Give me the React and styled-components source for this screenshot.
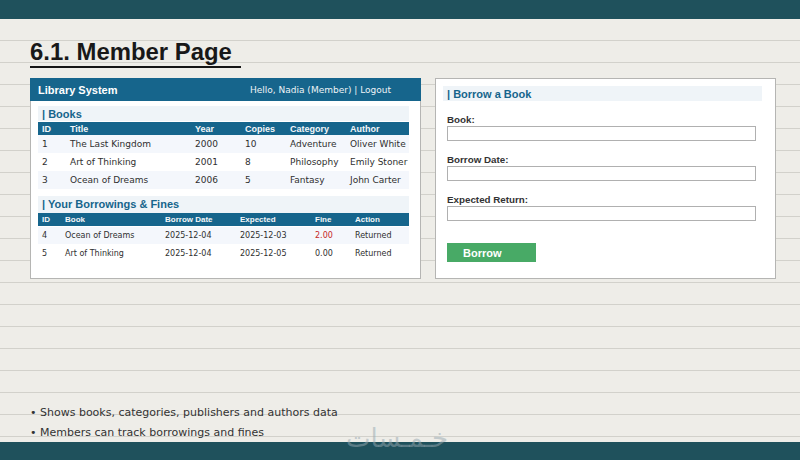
import React from 'react';
import styled, { createGlobalStyle } from 'styled-components';

const GlobalStyle = createGlobalStyle`
  html, body {
    margin: 0;
    padding: 0;
    height: 460px;
    overflow: hidden;
  }
  * {
    box-sizing: border-box;
  }
`;

const Slide = styled.div`
  position: relative;
  width: 800px;
  height: 460px;
  display: flex;
  flex-direction: column;
  background-color: #eeede8;
  background-image: repeating-linear-gradient(
    to bottom,
    transparent 0,
    transparent 18px,
    #d2d1cb 18px,
    #d2d1cb 19px,
    transparent 19px,
    transparent 22px
  );
  font-family: 'DejaVu Sans', sans-serif;
  overflow: hidden;
`;

const Band = styled.div`
  height: ${({ $height }) => $height}px;
  flex: none;
  background: #1f515c;
`;

const Content = styled.main`
  flex: 1;
  display: flex;
  flex-direction: column;
  padding: 20px 24px 0 30px;
`;

const Heading = styled.h1`
  align-self: flex-start;
  width: 211px;
  height: 29px;
  margin: 0 0 10px;
  border-bottom: 2px solid #151515;
  font-family: 'Liberation Sans', sans-serif;
  font-size: 23.9px;
  line-height: 26px;
  font-weight: 700;
  color: #181818;
  white-space: nowrap;
`;

const Columns = styled.div`
  display: flex;
  align-items: flex-start;
  gap: 14px;
`;

const Panel = styled.section`
  width: ${({ $width }) => $width}px;
  height: 201px;
  flex: none;
  background: #fff;
  border: 1px solid #b5b5b3;
`;

const AppBar = styled.header`
  margin: -1px -1px 0;
  height: 23px;
  display: flex;
  align-items: center;
  padding: 0 0 0 8px;
  background: #16658c;
  color: #fff;
`;

const Brand = styled.div`
  width: 212px;
  font-family: 'Liberation Sans', sans-serif;
  font-size: 11px;
  font-weight: 700;
`;

const UserInfo = styled.div`
  font-size: 9px;
  color: #eef3f6;
`;

const Body = styled.div`
  padding: ${({ $top }) => $top}px ${({ $right }) => $right}px 0 7px;
`;

const SectionTitle = styled.h2`
  height: ${({ $height }) => $height}px;
  margin: ${({ $top }) => $top || 0}px 0 0;
  padding-left: 4px;
  background: #eff4f8;
  font-family: 'Liberation Sans', sans-serif;
  font-size: 11px;
  font-weight: 700;
  line-height: ${({ $line }) => $line}px;
  color: #16658c;
`;

const Table = styled.table`
  width: 371px;
  margin-top: ${({ $top }) => $top}px;
  table-layout: fixed;
  border-collapse: collapse;
`;

const HeadCell = styled.th`
  height: 13px;
  padding: 0 0 0 4px;
  background: #16658c;
  color: #f4f7f9;
  font-family: 'Liberation Sans', sans-serif;
  font-size: ${({ $small }) => ($small ? 8 : 9)}px;
  font-weight: 700;
  text-align: left;
  white-space: nowrap;
`;

const BodyRow = styled.tr`
  background: ${({ $shade }) => ($shade ? '#f4f7fc' : '#fff')};
`;

const Cell = styled.td`
  height: 18px;
  padding: 0 0 0 4px;
  font-size: ${({ $small }) => ($small ? 8 : 9)}px;
  color: ${({ $red }) => ($red ? '#c62828' : '#2f2f2f')};
  white-space: nowrap;
  overflow: visible;
  box-shadow: ${({ $small }) => ($small ? 'inset 0 1px 0 #fff' : 'none')};
`;

const Field = styled.div`
  margin-top: 12px;
  padding-left: 4px;
`;

const Label = styled.label`
  display: block;
  height: 12px;
  margin-bottom: 1px;
  font-family: 'Liberation Sans', sans-serif;
  font-size: 9.8px;
  line-height: 14px;
  font-weight: 700;
  color: #333;
`;

const Input = styled.input`
  display: block;
  width: 309px;
  height: 15px;
  margin: 0;
  padding: 0;
  background: #fff;
  border: 1px solid #b0b0b0;
  border-radius: 0;
`;

const BorrowButton = styled.button`
  display: block;
  width: 89px;
  height: 19px;
  margin: 22px 0 0 4px;
  padding: 0 0 0 16px;
  border: none;
  background: #48aa66;
  color: #fff;
  font-family: 'Liberation Sans', sans-serif;
  font-size: 11px;
  font-weight: 700;
  text-align: left;
`;

const Notes = styled.ul`
  list-style: none;
  margin: auto 0 -1px;
  padding: 0;
  font-size: 11px;
  line-height: 20px;
  color: #333;
`;

const Watermark = styled.div`
  position: absolute;
  right: 352px;
  top: 423px;
  direction: rtl;
  font-size: 26px;
  line-height: 30px;
  color: rgba(150, 168, 176, 0.5);
  white-space: nowrap;
`;

const books = [
  ['1', 'The Last Kingdom', '2000', '10', 'Adventure', 'Oliver White'],
  ['2', 'Art of Thinking', '2001', '8', 'Philosophy', 'Emily Stoner'],
  ['3', 'Ocean of Dreams', '2006', '5', 'Fantasy', 'John Carter'],
];

const borrowings = [
  ['4', 'Ocean of Dreams', '2025-12-04', '2025-12-03', '2.00', 'Returned'],
  ['5', 'Art of Thinking', '2025-12-04', '2025-12-05', '0.00', 'Returned'],
];

const DataTable = ({ widths, heads, rows, small, top }) => (
  <Table $top={top}>
    <colgroup>
      {widths.map((w, i) => (
        <col key={i} width={w} />
      ))}
    </colgroup>
    <thead>
      <tr>
        {heads.map((h) => (
          <HeadCell key={h} $small={small}>{h}</HeadCell>
        ))}
      </tr>
    </thead>
    <tbody>
      {rows.map((row, r) => (
        <BodyRow key={row[0]} $shade={r % 2 === 0}>
          {row.map((value, c) => (
            <Cell key={c} $small={small} $red={value === '2.00'}>{value}</Cell>
          ))}
        </BodyRow>
      ))}
    </tbody>
  </Table>
);

const App = () => (
  <Slide>
    <GlobalStyle />
    <Band $height={19} />
    <Content>
      <Heading>6.1. Member Page</Heading>
      <Columns>
        <Panel $width={391}>
          <AppBar>
            <Brand>Library System</Brand>
            <UserInfo>Hello, Nadia (Member) | Logout</UserInfo>
          </AppBar>
          <Body $top={5} $right={11}>
            <SectionTitle $height={15} $line={17}>| Books</SectionTitle>
            <DataTable
              top={1}
              widths={[28, 125, 50, 45, 60, 63]}
              heads={['ID', 'Title', 'Year', 'Copies', 'Category', 'Author']}
              rows={books}
            />
            <SectionTitle $height={17} $line={17} $top={7}>| Your Borrowings &amp; Fines</SectionTitle>
            <DataTable
              small
              top={0}
              widths={[23, 100, 75, 75, 40, 58]}
              heads={['ID', 'Book', 'Borrow Date', 'Expected', 'Fine', 'Action']}
              rows={borrowings}
            />
          </Body>
        </Panel>
        <Panel $width={341}>
          <Body $top={7} $right={13}>
            <SectionTitle $height={15} $line={17}>| Borrow a Book</SectionTitle>
            <Field>
              <Label>Book:</Label>
              <Input />
            </Field>
            <Field>
              <Label>Borrow Date:</Label>
              <Input />
            </Field>
            <Field>
              <Label>Expected Return:</Label>
              <Input />
            </Field>
            <BorrowButton>Borrow</BorrowButton>
          </Body>
        </Panel>
      </Columns>
      <Notes>
        <li>• Shows books, categories, publishers and authors data</li>
        <li>• Members can track borrowings and fines</li>
      </Notes>
    </Content>
    <Band $height={18} />
    <Watermark>خـمـسات</Watermark>
  </Slide>
);

export default App;
